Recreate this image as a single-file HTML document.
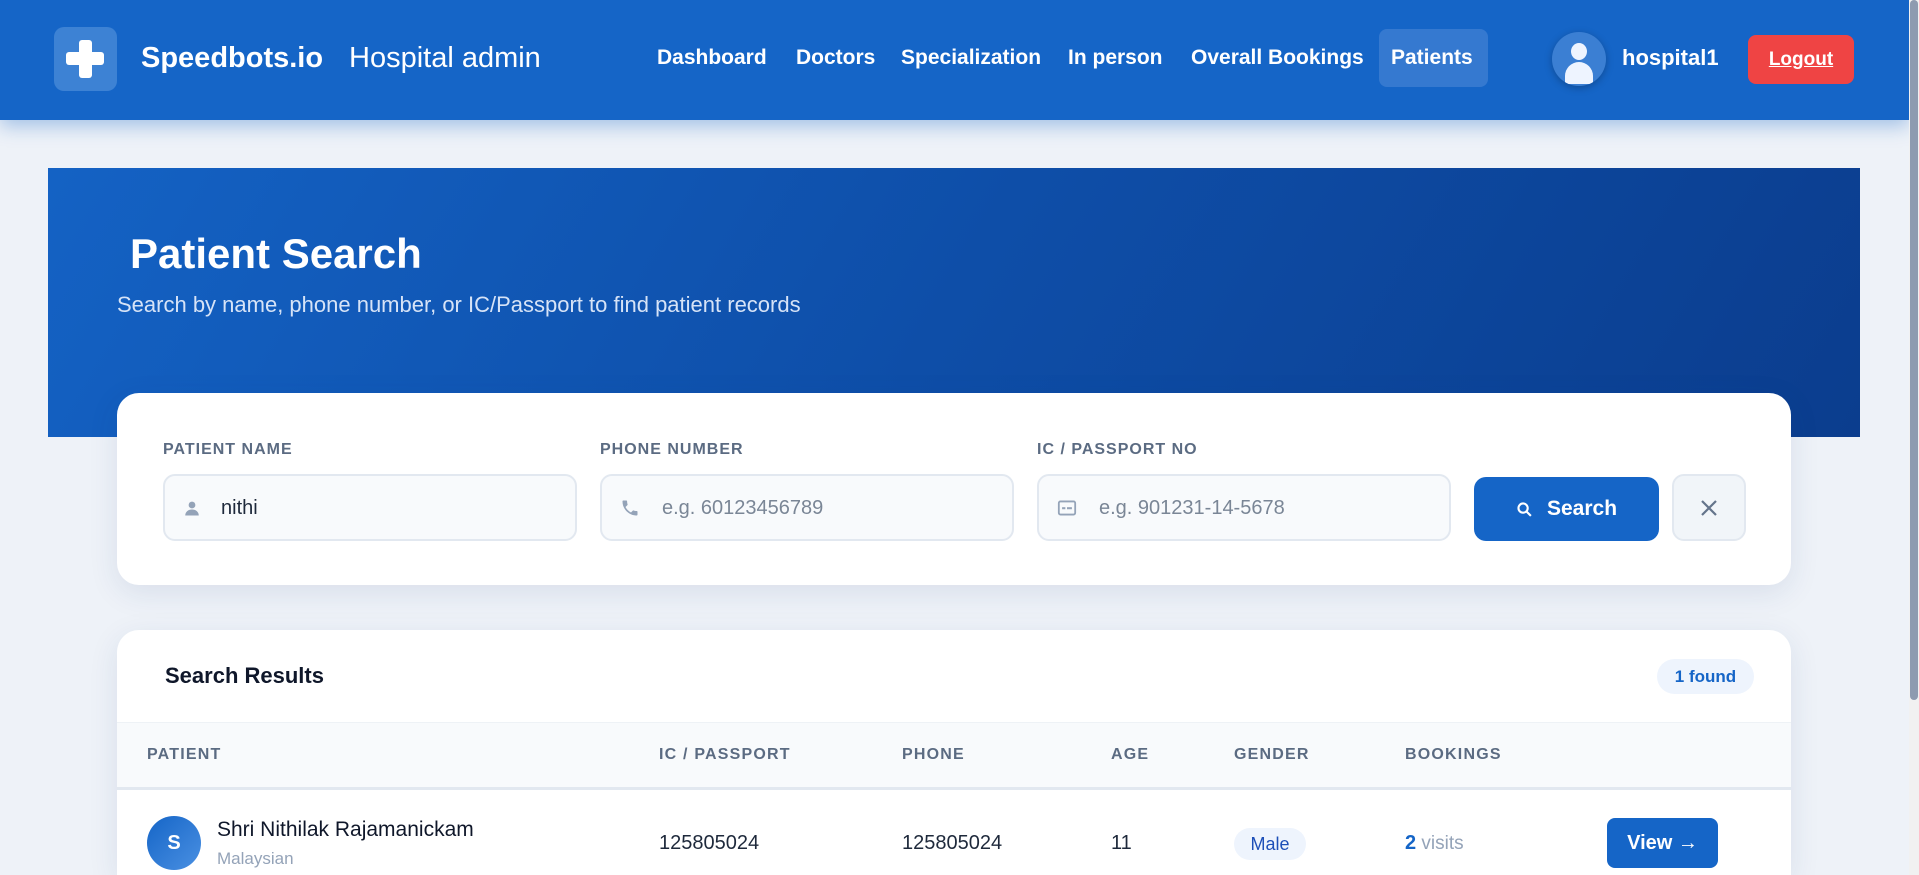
<!DOCTYPE html>
<html style="width:1919px;height:875px;overflow:hidden"><head><meta charset="utf-8"><style>
*{box-sizing:border-box;margin:0;padding:0}
html,body{width:1919px;height:875px;overflow:hidden}
body{background:#eef2f8;font-family:"Liberation Sans","DejaVu Sans",sans-serif;position:relative}
.hdr{position:absolute;left:0;top:0;width:1909px;height:120px;background:#1565c7;box-shadow:0 6px 18px rgba(21,101,199,.35)}
.abs{position:absolute}
.sb{position:absolute;right:0;top:0;width:10px;height:875px;background:#f1f1f1}
.sb div{position:absolute;left:1px;top:0;width:8px;height:700px;background:#8e9bb0;border-radius:4px}
.nav{color:#fff;font-size:21px;font-weight:bold;top:46px}
.hero{left:48px;top:168px;width:1812px;height:269px;background:linear-gradient(120deg,#1462c4 0%,#0e4ea8 50%,#0b3d8e 100%)}
.card{background:#fff;border-radius:22px;box-shadow:0 8px 30px rgba(30,60,120,.10)}
.lbl{font-size:16px;font-weight:bold;color:#5b6b82;letter-spacing:1px;top:441px}
.inp{top:474px;height:67px;background:#f8fafc;border:2px solid #e2e8f0;border-radius:12px}
.ph{position:absolute;left:60px;top:21px;font-size:20px;color:#7a8696}
.th{font-size:16px;font-weight:bold;color:#5b6b82;letter-spacing:1.2px;top:746px}
.td{font-size:20px;color:#1e293b;top:832px}
</style></head><body>
<div class="hdr">
 <div class="abs" style="left:54px;top:27px;width:63px;height:64px;border-radius:10px;background:#3d82d4"></div>
 <div class="abs" style="left:79px;top:40px;width:13px;height:38px;background:#fff;border-radius:3px"></div>
 <div class="abs" style="left:66px;top:52px;width:38px;height:13px;background:#fff;border-radius:3px"></div>
 <div class="abs" style="left:141px;top:42px;color:#fff;font-size:29px;font-weight:bold">Speedbots.io</div>
 <div class="abs" style="left:349px;top:42px;color:#fff;font-size:29px">Hospital admin</div>
 <div class="abs nav" style="left:657px">Dashboard</div>
 <div class="abs nav" style="left:796px">Doctors</div>
 <div class="abs nav" style="left:901px">Specialization</div>
 <div class="abs nav" style="left:1068px">In person</div>
 <div class="abs nav" style="left:1191px">Overall Bookings</div>
 <div class="abs" style="left:1379px;top:29px;width:109px;height:58px;border-radius:8px;background:#3579d0"></div>
 <div class="abs nav" style="left:1391px">Patients</div>
 <div class="abs" style="left:1552px;top:32px;width:54px;height:54px;border-radius:50%;background:#3b7fd3;box-shadow:0 2px 8px rgba(0,0,0,.25);overflow:hidden">
  <div class="abs" style="left:19px;top:11px;width:16px;height:17px;border-radius:50%;background:#eef4ff"></div>
  <div class="abs" style="left:13px;top:30px;width:28px;height:22px;border-radius:14px 14px 0 0;background:#eef4ff"></div>
 </div>
 <div class="abs" style="left:1622px;top:45px;color:#fff;font-size:22px;font-weight:bold">hospital1</div>
 <div class="abs" style="left:1748px;top:35px;width:106px;height:49px;border-radius:8px;background:#ef4444;color:#fff;font-size:19px;font-weight:bold;text-decoration:underline;text-align:center;line-height:49px">Logout</div>
</div>
<div class="sb"><div></div></div>
<div class="abs hero">
 <div class="abs" style="left:82px;top:62px;color:#fff;font-size:42px;font-weight:bold">Patient Search</div>
 <div class="abs" style="left:69px;top:124px;color:#d6e3f7;font-size:22px">Search by name, phone number, or IC/Passport to find patient records</div>
</div>
<div class="abs card" style="left:117px;top:393px;width:1674px;height:192px"></div>
<div class="abs lbl" style="left:163px">PATIENT NAME</div>
<div class="abs lbl" style="left:600px">PHONE NUMBER</div>
<div class="abs lbl" style="left:1037px">IC / PASSPORT NO</div>
<div class="abs inp" style="left:163px;width:414px">
 <svg class="abs" style="left:18px;top:23px" width="18" height="18" viewBox="0 0 24 24"><circle cx="12" cy="8" r="4.5" fill="#94a3b8"/><path d="M3 22c0-5 4-8 9-8s9 3 9 8z" fill="#94a3b8"/></svg>
 <div class="ph" style="left:56px;color:#1e293b">nithi</div></div>
<div class="abs inp" style="left:600px;width:414px">
 <svg class="abs" style="left:18px;top:22px" width="20" height="20" viewBox="0 0 24 24"><path d="M6.6 10.8c1.4 2.8 3.8 5.1 6.6 6.6l2.2-2.2c.3-.3.7-.4 1-.2 1.1.4 2.3.6 3.6.6.6 0 1 .4 1 1V20c0 .6-.4 1-1 1C10.6 21 3 13.4 3 4c0-.6.4-1 1-1h3.5c.6 0 1 .4 1 1 0 1.3.2 2.5.6 3.6.1.3 0 .7-.2 1z" fill="#94a3b8"/></svg>
 <div class="ph">e.g. 60123456789</div></div>
<div class="abs inp" style="left:1037px;width:414px">
 <svg class="abs" style="left:18px;top:23px" width="20" height="18" viewBox="0 0 24 22"><rect x="2" y="3" width="20" height="16" rx="2" fill="none" stroke="#94a3b8" stroke-width="2.2"/><rect x="6" y="10" width="4" height="2.5" fill="#94a3b8"/><rect x="12" y="10" width="6" height="2.5" fill="#94a3b8"/></svg>
 <div class="ph">e.g. 901231-14-5678</div></div>
<div class="abs" style="left:1474px;top:477px;width:185px;height:64px;border-radius:12px;background:#1565c7;color:#fff;font-size:21px;font-weight:bold;line-height:64px;padding-left:73px">
 <svg class="abs" style="left:42px;top:24px" width="17" height="17" viewBox="0 0 24 24"><circle cx="10" cy="10" r="6.5" fill="none" stroke="#fff" stroke-width="3"/><path d="M15 15l6 6" stroke="#fff" stroke-width="3"/></svg>Search</div>
<div class="abs" style="left:1672px;top:474px;width:74px;height:67px;border-radius:12px;background:#f1f5f9;border:2px solid #e2e8f0">
 <svg class="abs" style="left:25px;top:22px" width="20" height="20" viewBox="0 0 20 20"><path d="M3 3l14 14M17 3L3 17" stroke="#64748b" stroke-width="2.2"/></svg></div>

<div class="abs card" style="left:117px;top:630px;width:1674px;height:245px;border-radius:22px 22px 0 0;overflow:hidden">
 <div class="abs" style="left:48px;top:33px;font-size:22px;font-weight:bold;color:#0f172a">Search Results</div>
 <div class="abs" style="left:1540px;top:29px;width:97px;height:35px;border-radius:18px;background:#eef4fd;color:#1565c7;font-size:17px;font-weight:bold;text-align:center;line-height:35px">1 found</div>
 <div class="abs" style="left:0;top:92px;width:1674px;height:68px;background:#f8fafc;border-top:1px solid #eef2f6;border-bottom:3px solid #e2e8f0"></div>
</div>
<div class="abs th" style="left:147px">PATIENT</div>
<div class="abs th" style="left:659px">IC / PASSPORT</div>
<div class="abs th" style="left:902px">PHONE</div>
<div class="abs th" style="left:1111px">AGE</div>
<div class="abs th" style="left:1234px">GENDER</div>
<div class="abs th" style="left:1405px">BOOKINGS</div>
<div class="abs" style="left:147px;top:816px;width:54px;height:54px;border-radius:50%;background:linear-gradient(135deg,#1565c7,#4a90e2);color:#fff;font-weight:bold;font-size:20px;text-align:center;line-height:54px">S</div>
<div class="abs" style="left:217px;top:818px;font-size:21px;color:#0f172a">Shri Nithilak Rajamanickam</div>
<div class="abs" style="left:217px;top:849px;font-size:17px;color:#94a3b8">Malaysian</div>
<div class="abs td" style="left:659px">125805024</div>
<div class="abs td" style="left:902px">125805024</div>
<div class="abs td" style="left:1111px">11</div>
<div class="abs" style="left:1234px;top:828px;width:72px;height:32px;border-radius:16px;background:#eef4fd;color:#1d4fb8;font-size:18px;text-align:center;line-height:32px">Male</div>
<div class="abs" style="left:1405px;top:832px;font-size:19px;color:#94a3b8"><b style="color:#1565c7;font-size:20px">2</b> visits</div>
<div class="abs" style="left:1607px;top:818px;width:111px;height:50px;border-radius:8px;background:#1565c7;color:#fff;font-size:20px;font-weight:bold;text-align:center;line-height:50px">View →</div>
</body></html>
